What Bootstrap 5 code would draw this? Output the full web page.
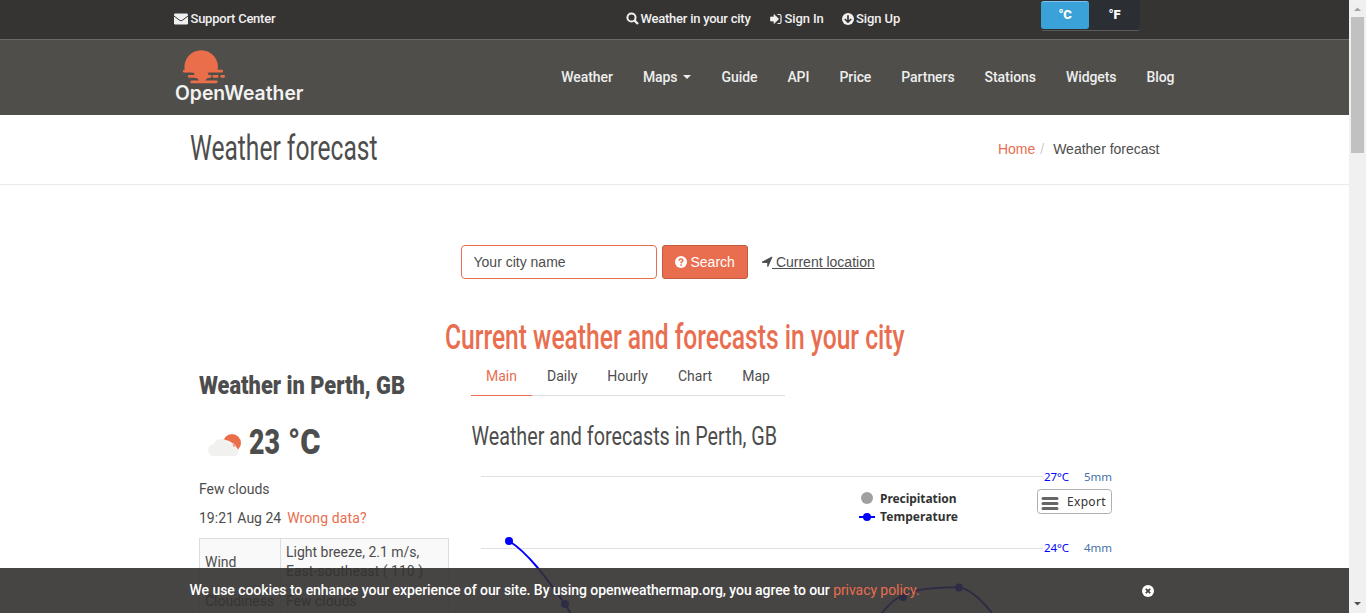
<!DOCTYPE html>
<html lang="en">
<head>
<meta charset="utf-8">
<title>Weather forecast - OpenWeather</title>
<link href="https://cdn.jsdelivr.net/npm/bootstrap@5.3.0/dist/css/bootstrap.min.css" rel="stylesheet">
<style>
:root{--ow-orange:#e96e50;--ow-text:#4d4d4d}
html,body{height:613px;overflow:hidden}
body{font:14px/20px Roboto,"Liberation Sans",sans-serif;color:var(--ow-text);background:#fff}
a{color:var(--ow-orange);text-decoration:none}
svg{display:block;overflow:visible}
.viewport{height:613px}
.site{width:1349px;overflow:hidden}
.wrap{width:1000px;margin:0 auto}
.topbar{height:40px;background:#363432;border-bottom:1px solid #6b6a67;font-size:13px;font-weight:500;line-height:37px;letter-spacing:-.24px}
.topbar a{color:#f0f0f0;white-space:nowrap}
.unit-switch{height:31px;background:#2b2e33;border-radius:3px;border-bottom:1px solid #5b5b5b;font-size:13px;font-weight:900;line-height:29px;width:99px;color:#fff;text-align:center}
.unit-switch .on{width:48px;height:28px;margin-top:1px;background:#3aa2d8;border-radius:3px;border-top:1px solid #7cc4ec;line-height:26px}
.mainnav{height:75px;background:#4f4e4a}
.mainnav .nav-link{color:#eee;font-weight:500;padding:0 15px;line-height:20px;letter-spacing:-.07px}
.caret{border-top:4px solid #eee;border-left:4px solid transparent;border-right:4px solid transparent;margin-left:6px}
.crumbs{height:70px;border-bottom:1px solid #eaeaea}
.fallback-sans{font-family:"Liberation Sans",Arial,sans-serif}
.search-row{padding:60px 0 0 286px;height:138px}
.search-row .form-control{width:196px;height:34px;border:1px solid var(--ow-orange);border-radius:4px;padding:6px 12px;font-size:14px;line-height:20px;color:#555}
.search-row .form-control::placeholder{color:#4d4d4d;opacity:1}
.btn-find{width:86px;height:34px;background:var(--ow-orange);border:1px solid #c4593d;border-radius:3px;color:#fff;font-size:14px;line-height:20px;padding:0 0 0 12px;margin-left:5px}
.here{color:#4d4d4d;margin-left:13px}
.here span{text-decoration:underline}
.now{width:250px;margin-left:24.5px}
.forecast{margin-left:22px;width:660px}
.tabs .nav-link{color:#4d4d4d;padding:0 15px;height:38px;line-height:36px;border-bottom:1px solid #ddd}
.tabs .nav-link:not(.active){letter-spacing:.02px}
.tabs .nav-link.active{color:var(--ow-orange);border-bottom-color:var(--ow-orange)}
.facts{border:1px solid #ddd;background:#f9f9f9;width:250px;margin:0;color:#4d4d4d}
.facts td{padding:5px;line-height:19px;vertical-align:middle}
.facts tr:first-child td{padding:4px 5px 6px 5px}
.facts td:first-child{border-right:1px solid #ddd;width:81px}
.cookie{height:45px;width:1349px;background:rgba(51,49,48,.9);color:#fff;font-weight:500;line-height:45px;letter-spacing:-.06px}
.bar{width:17px;background:#f0f0f0}
.thumb{width:13px;height:136px;background:#c1c1c1;margin-left:2px}
</style>
</head>
<body>
<div class="viewport d-flex position-relative">
<div class="site flex-shrink-0">
  <div class="topbar"><div class="wrap d-flex">
    <a href="#" class="d-flex align-items-center" style="width:451px"><svg width="14" height="12" style="margin:0 2px 0 -1px"><rect y=".5" width="14" height="11" rx="1.2" fill="#f0f0f0"/><path d="M0 3 L5.5 7.2Q7 8.4 8.5 7.2L14 3" fill="none" stroke="#363432" stroke-width="1"/></svg><span style="padding-left:1px">Support Center</span></a>
    <a href="#" class="d-flex align-items-center" style="width:144.5px"><svg width="13" height="13" style="margin-right:2px"><circle cx="5.5" cy="5.5" r="4.1" fill="none" stroke="#f0f0f0" stroke-width="2"/><path d="M8.6 8.6L12 12" stroke="#f0f0f0" stroke-width="2.3"/></svg>Weather in your city</a>
    <a href="#" class="d-flex align-items-center" style="width:72px;letter-spacing:-.1px"><svg width="12" height="12" style="margin-right:2.5px"><path d="M0.5 4H4V1.5L8.7 6L4 10.5V8H0.5Z" fill="#f0f0f0" stroke="#f0f0f0" stroke-width=".7" stroke-linejoin="round"/><path d="M7.5 1.5H9.5Q11 1.5 11 3V9Q11 10.5 9.5 10.5H7.5" fill="none" stroke="#f0f0f0" stroke-width="1.2"/></svg>Sign In</a>
    <a href="#" class="d-flex align-items-center" style="width:199px;letter-spacing:-.1px"><svg width="12" height="12" style="margin-right:2px"><circle cx="6" cy="6" r="6" fill="#f0f0f0"/><path d="M6 2.3V9M2.8 6L6 9.1L9.2 6" fill="none" stroke="#363432" stroke-width="1.7"/></svg>Sign Up</a>
    <div class="unit-switch d-flex"><div class="on">°C</div><div class="flex-fill">°F</div></div>
  </div></div>
  <nav class="mainnav"><div class="wrap d-flex">
    <svg width="130" height="64" aria-label="OpenWeather" fill="#eb6e4b">
      <g transform="translate(-.8 1.7)"><path d="M10.5 28.5A16.8 16.8 0 1 1 43.5 28.5Z"/>
      <g stroke="#eb6e4b" stroke-width="2.8" stroke-linecap="round"><path d="M10 29.5H47.5M15 34.6H36M39.5 34.6H43M47.5 34.6H49.5M17.5 40.2H42"/></g><path d="M15 30H36Q31 31 36 34V35.5Q31 36.5 31 40H25Q25 36.5 20 35.5V31Z"/></g>
      <text x="0" y="59.5" textLength="128.5" lengthAdjust="spacingAndGlyphs" font-family="Inter" font-weight="600" font-size="19.5" fill="#f2f2f2">OpenWeather</text>
    </svg>
    <div class="nav ms-auto flex-nowrap align-items-start" style="margin-right:-15px;padding-top:27px">
      <a class="nav-link" href="#">Weather</a><a class="nav-link d-flex align-items-center" href="#">Maps<span class="caret"></span></a><a class="nav-link" href="#">Guide</a><a class="nav-link" href="#">API</a><a class="nav-link" href="#">Price</a><a class="nav-link" href="#">Partners</a><a class="nav-link" href="#">Stations</a><a class="nav-link" href="#">Widgets</a><a class="nav-link" href="#">Blog</a>
    </div>
  </div></nav>
  <header class="crumbs"><div class="wrap d-flex">
    <svg width="220" height="69" role="heading"><text x="15" y="45" textLength="187.5" lengthAdjust="spacingAndGlyphs" font-family="Roboto" font-size="35" fill="#4d4d4d">Weather forecast</text></svg>
    <div class="ms-auto fallback-sans d-flex" style="padding:24px 15px 0 0"><a href="#">Home</a><span style="color:#ccc;padding:0 9px 0 5px">/</span><span>Weather forecast</span></div>
  </div></header>
  <main class="wrap">
    <form class="search-row d-flex align-items-start">
      <input class="form-control fallback-sans" placeholder="Your city name">
      <button type="button" class="btn-find fallback-sans d-flex align-items-center"><svg width="12" height="12" style="margin-right:4px"><circle cx="6" cy="6" r="6" fill="#fff"/><path d="M4 4.7Q4.2 3 6 3T7.9 4.6Q7.9 5.5 6.1 6.3V7.2M6.1 8.2V9.7" fill="none" stroke="#e96e50" stroke-width="1.6"/></svg>Search</button>
      <a href="#" class="here fallback-sans d-flex align-items-center" style="height:34px"><svg width="12" height="12"><path d="M11 1L6.8 10.5V6.6L1 6.2Z" fill="#4d4d4d" stroke="#4d4d4d" stroke-linejoin="round"/></svg><span style="margin-left:-.5px">&nbsp;Current location</span></a>
    </form>
    <svg width="1000" height="35" role="heading"><text x="270" y="26" textLength="459.5" lengthAdjust="spacingAndGlyphs" font-family="Roboto" font-weight="500" font-size="35" fill="#e96e50">Current weather and forecasts in your city</text></svg>
    <div class="d-flex">
      <section class="now flex-shrink-0">
        <svg width="250" height="121"><text y="35.5" textLength="206" lengthAdjust="spacingAndGlyphs" font-family="Roboto" font-weight="900" font-size="26.5" fill="#4d4d4d">Weather in Perth, GB</text>
          <circle cx="33" cy="85" r="9" fill="#eb6e4b"/><path d="M14.5 98A5.8 5.8 0 0 1 15 86.5A8.5 8.5 0 0 1 28 82.5A7 7 0 0 1 35 88.5A5 5 0 0 1 37 98Z" fill="#f1f1f0" transform="translate(-.5 0)"/><path d="M26 83.5Q28 81.5 32 85Q37 86 37 91" fill="none" stroke="#fff" stroke-width=".8"/>
          <text y="95.5" font-family="Roboto" font-weight="900" font-size="34.5" fill="#4d4d4d"><tspan x="50" textLength="31" lengthAdjust="spacingAndGlyphs">23</tspan> <tspan x="89" textLength="32.5" lengthAdjust="spacingAndGlyphs">°C</tspan></text></svg>
        <div style="height:29px">Few clouds</div>
        <div style="height:30px">19:21 Aug 24&nbsp; <a href="#" style="margin-left:-1px;letter-spacing:.12px">Wrong data?</a></div>
        <table class="facts"><tr><td>Wind</td><td>Light breeze, 2.1 m/s, East-southeast ( 110 )</td></tr><tr><td>Cloudiness</td><td>Few clouds</td></tr></table>
      </section>
      <section class="forecast flex-shrink-0">
        <div class="nav tabs flex-nowrap"><a class="nav-link active" href="#">Main</a><a class="nav-link" href="#">Daily</a><a class="nav-link" href="#">Hourly</a><a class="nav-link" href="#">Chart</a><a class="nav-link" href="#">Map</a></div>
        <!-- Chart coordinates share the page's grid, so data points read as screen units -->
        <svg width="660" height="217" viewBox="471 396 660 217">
          <text x="471.5" y="444.5" textLength="305.5" lengthAdjust="spacingAndGlyphs" font-family="Roboto" font-size="26" fill="#4d4d4d">Weather and forecasts in Perth, GB</text>
          <path d="M481 476.5H1043M481 548.5H1043" stroke="#e0e0e0"/>
          <g fill="none" stroke="#00f" stroke-width="2"><path d="M509 541C527 552 546 577 565 604Q570 612 580 630M878 618C890 602 900 590 936 588C950 587.5 954 587 959 587.5C972 589 984 603 992 613M859 517H875"/></g>
          <g fill="#00f"><circle cx="509" cy="541" r="4"/><circle cx="565" cy="604" r="4"/><circle cx="903" cy="597" r="4"/><circle cx="959" cy="587.5" r="4"/><circle cx="867" cy="517" r="4"/></g>
          <circle cx="867" cy="498" r="6" fill="#a0a0a0"/>
          <g font-family="Noto Sans" font-size="12">
            <text x="880" y="503" textLength="76.5" font-weight="700" fill="#333">Precipitation</text><text x="880" y="521" textLength="78" font-weight="700" fill="#333">Temperature</text>
          </g>
          <g font-family="Noto Sans" font-size="11.5"><text x="1044" y="481" textLength="25" fill="#00f">27°C</text><text x="1044" y="552" textLength="25" fill="#00f">24°C</text><text x="1084" y="481" textLength="28" fill="#4572a7">5mm</text><text x="1084" y="552" textLength="28" fill="#4572a7">4mm</text></g>
          <rect x="1037.5" y="489.5" width="74" height="24" rx="3" fill="#fff" stroke="#b0b0b0"/><path d="M1043 498.5H1057M1043 503.5H1057M1043 508.5H1057" stroke="#666" stroke-width="3" stroke-linecap="round"/>
          <text x="1067" y="506" textLength="38.5" font-family="Noto Sans" font-size="12" fill="#333">Export</text>
        </svg>
      </section>
    </div>
  </main>
  <div class="cookie position-absolute bottom-0 start-0"><div class="wrap d-flex align-items-center">
    <span style="padding-left:15px">We use cookies to enhance your experience of our site. By using openweathermap.org, you agree to our <a href="#" style="font-weight:400">privacy policy.</a></span>
    <svg width="12" height="12" class="ms-auto" style="margin-right:21px"><circle cx="6" cy="6" r="6" fill="#fff"/><path d="M3.8 3.8L8.2 8.2M8.2 3.8L3.8 8.2" stroke="#484644" stroke-width="1.8"/></svg>
  </div></div>
</div>
<div class="bar d-flex flex-column">
  <svg width="17" height="17"><path d="M5 11L8.5 7.5L12 11Z" fill="#a3a3a3"/></svg><div class="thumb"></div>
  <svg class="mt-auto" width="17" height="17"><path d="M5 6L8.5 9.5L12 6Z" fill="#505050"/></svg>
</div>
</div>
<script src="https://cdn.jsdelivr.net/npm/bootstrap@5.3.0/dist/js/bootstrap.bundle.min.js"></script>
</body>
</html>
